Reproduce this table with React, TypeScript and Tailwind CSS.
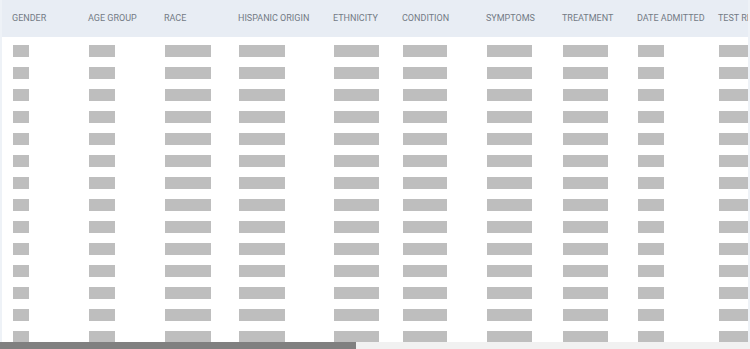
const columns = [
  { label: "GENDER", width: 76, bar: 16 },
  { label: "AGE GROUP", width: 76, bar: 26 },
  { label: "RACE", width: 74, bar: 46 },
  { label: "HISPANIC ORIGIN", width: 95, bar: 46 },
  { label: "ETHNICITY", width: 69, bar: 45 },
  { label: "CONDITION", width: 84, bar: 44 },
  { label: "SYMPTOMS", width: 76, bar: 45 },
  { label: "TREATMENT", width: 75, bar: 45 },
  { label: "DATE ADMITTED", width: 81, bar: 26 },
  { label: "TEST RESULT", width: 110, bar: 46 },
];

const rows = Array.from({ length: 14 }, (_, i) => i);

export default function App() {
  return (
    <div className="flex h-[349px] w-[750px] flex-col overflow-hidden bg-white font-['Roboto',sans-serif]">
      <div className="flex-1 overflow-hidden border-l-2 border-r-2 border-[#eef2f7]">
        <div className="w-max">
          {/* header */}
          <div className="flex h-[37px] items-center bg-[#e8edf4]">
            {columns.map((c) => (
              <div
                key={c.label}
                className="shrink-0 whitespace-nowrap pl-[10px] text-[9px] text-[#737b85]"
                style={{ width: c.width }}
              >
                {c.label}
              </div>
            ))}
          </div>

          {/* skeleton rows */}
          <div className="pt-[3px]">
            {rows.map((r) => (
              <div key={r} className="flex h-[22px] items-center">
                {columns.map((c) => (
                  <div key={c.label} className="shrink-0 pl-[11px]" style={{ width: c.width }}>
                    <div className="h-[12px] bg-[#bebebe]" style={{ width: c.bar }} />
                  </div>
                ))}
              </div>
            ))}
          </div>
        </div>
      </div>

      {/* horizontal scrollbar */}
      <div className="flex h-[7px] shrink-0 bg-[#f1f1f1]">
        <div className="h-full w-[356px] bg-[#808080]" />
      </div>
    </div>
  );
}
